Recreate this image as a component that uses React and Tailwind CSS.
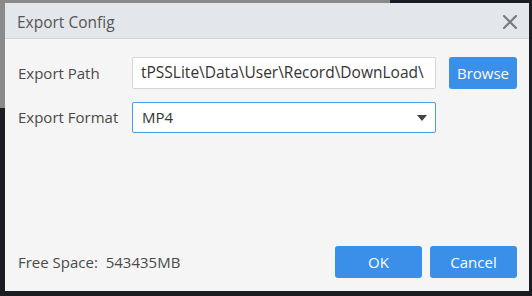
import React from 'react';

function Field({ label, children }) {
  return (
    <div className="flex items-center">
      <label className="w-[114px] shrink-0 text-[15px] text-[#4a4a4a]">{label}</label>
      {children}
    </div>
  );
}

export default function App() {
  return (
    <div className="relative w-[532px] h-[296px] overflow-hidden bg-[#1b1d22] font-['Open_Sans',_'Noto_Sans',_sans-serif]">
      {/* desktop behind the dialog */}
      <div className="absolute left-0 top-0 w-[390px] h-[3px] bg-[#8a8a8a]" />
      <div className="absolute left-0 top-0 w-[5px] h-[108px] bg-[#8a8a8a]" />

      <div className="relative ml-[5px] mt-[3px] w-[524px] h-[288px] flex flex-col bg-[#f5f5f5]">
        <div className="h-[36px] shrink-0 flex items-center justify-between pl-[12px] pr-[12px] pt-[4px] bg-[#e3e6ea] border-b border-[#d2d4d8]">
          <span className="text-[15.5px] text-[#555] leading-none">Export Config</span>
          <svg width="14" height="14" viewBox="0 0 14 14" className="-mt-[2px]">
            <path d="M1 1L13 13M13 1L1 13" stroke="#7a7a7a" strokeWidth="2.2" strokeLinecap="round" />
          </svg>
        </div>

        <div className="flex-1 flex flex-col pl-[13px] pr-[12px] pt-[18px] pb-[13px]">
          <div className="flex flex-col gap-[13px]">
            <Field label="Export Path">
              <div className="w-[304px] h-[32px] flex items-center px-[8px] bg-white border border-[#d6d6d6] rounded-[2px] text-[15.5px] text-[#333] whitespace-nowrap overflow-hidden">
                tPSSLite\Data\User\Record\DownLoad\
              </div>
              <button className="ml-[13px] w-[68px] h-[32px] rounded-[3px] bg-[#3a8fe8] text-white text-[15px]">
                Browse
              </button>
            </Field>
            <Field label="Export Format">
              <div className="w-[304px] h-[31px] flex items-center justify-between pl-[9px] pr-[8px] bg-white border border-[#4a9be8] rounded-[2px] text-[15px] text-[#333]">
                <span>MP4</span>
                <svg width="10" height="6" viewBox="0 0 10 6"><path d="M0 0h10L5 6z" fill="#444" /></svg>
              </div>
            </Field>
          </div>

          <div className="mt-auto flex items-center justify-between">
            <span className="text-[15px] text-[#4a4a4a] whitespace-pre">Free Space:  543435MB</span>
            <div className="flex gap-[8px]">
              <button className="w-[87px] h-[32px] rounded-[3px] bg-[#3a8fe8] text-white text-[15px]">OK</button>
              <button className="w-[87px] h-[32px] rounded-[3px] bg-[#3a8fe8] text-white text-[15px]">Cancel</button>
            </div>
          </div>
        </div>
      </div>
    </div>
  );
}
